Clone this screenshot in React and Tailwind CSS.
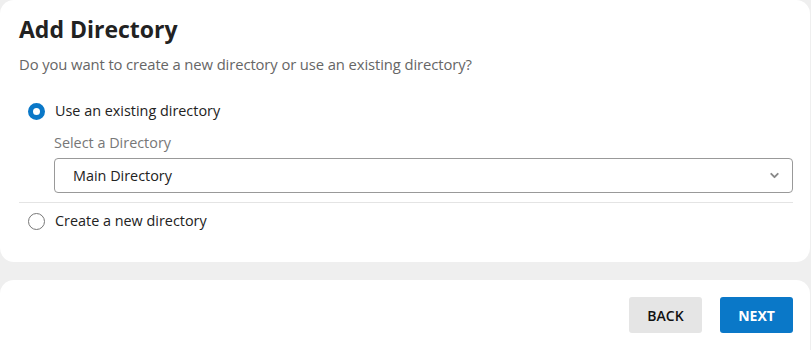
import { ChevronDown } from 'lucide-react'

function Radio({ checked, label }) {
    return (
        <label className="flex items-center gap-[10px] h-[26px] pl-[9px] cursor-pointer">
            {checked ? (
                <span className="w-[17px] h-[17px] rounded-full border-[5px] border-[#0a78c8] bg-white flex-shrink-0" />
            ) : (
                <span className="w-[17px] h-[17px] rounded-full border border-[#777] bg-white flex-shrink-0" />
            )}
            <span className="text-[14.4px] text-[#222]">{label}</span>
        </label>
    )
}

export default function App() {
    return (
        <div className="w-[811px] h-[350px] bg-[#efefef] overflow-hidden" style={{ fontFamily: '"Open Sans", "Noto Sans", sans-serif' }}>
            {/* Main card */}
            <div className="bg-white rounded-[14px] mr-px h-[262px] pl-[19px] pr-[17px] pt-[14px]">
                <h1 className="text-[23px] font-bold text-[#222] leading-[30px]">Add Directory</h1>
                <p className="text-[14.8px] text-[#666] mt-[9px] leading-[22px] tracking-[-0.1px]">
                    Do you want to create a new directory or use an existing directory?
                </p>

                <div className="mt-[23px]">
                    <Radio checked label="Use an existing directory" />
                    <div className="pl-[35px] mt-[9px]">
                        <p className="text-[14.4px] text-[#777] leading-[20px]">Select a Directory</p>
                        <div className="mt-[5px] h-[35px] border border-[#999] rounded-[4px] flex items-center justify-between pl-[18px] pr-[11px]">
                            <span className="text-[14.4px] text-[#222]">Main Directory</span>
                            <ChevronDown size={13} strokeWidth={3.5} className="text-[#888]" />
                        </div>
                    </div>
                    <div className="border-t border-[#e4e4e4] mt-[9px] pt-[5px]">
                        <Radio label="Create a new directory" />
                    </div>
                </div>
            </div>

            {/* Footer card */}
            <div className="bg-white rounded-[14px] mr-px mt-[18px] h-[90px] flex justify-end items-start gap-[18px] pt-[17px] pr-[17px]">
                <button className="w-[73px] h-[36px] rounded-[3px] bg-[#e5e5e5] text-[14px] font-semibold text-[#111]">BACK</button>
                <button className="w-[73px] h-[36px] rounded-[3px] bg-[#0a78c8] text-[14px] font-bold text-white">NEXT</button>
            </div>
        </div>
    )
}
